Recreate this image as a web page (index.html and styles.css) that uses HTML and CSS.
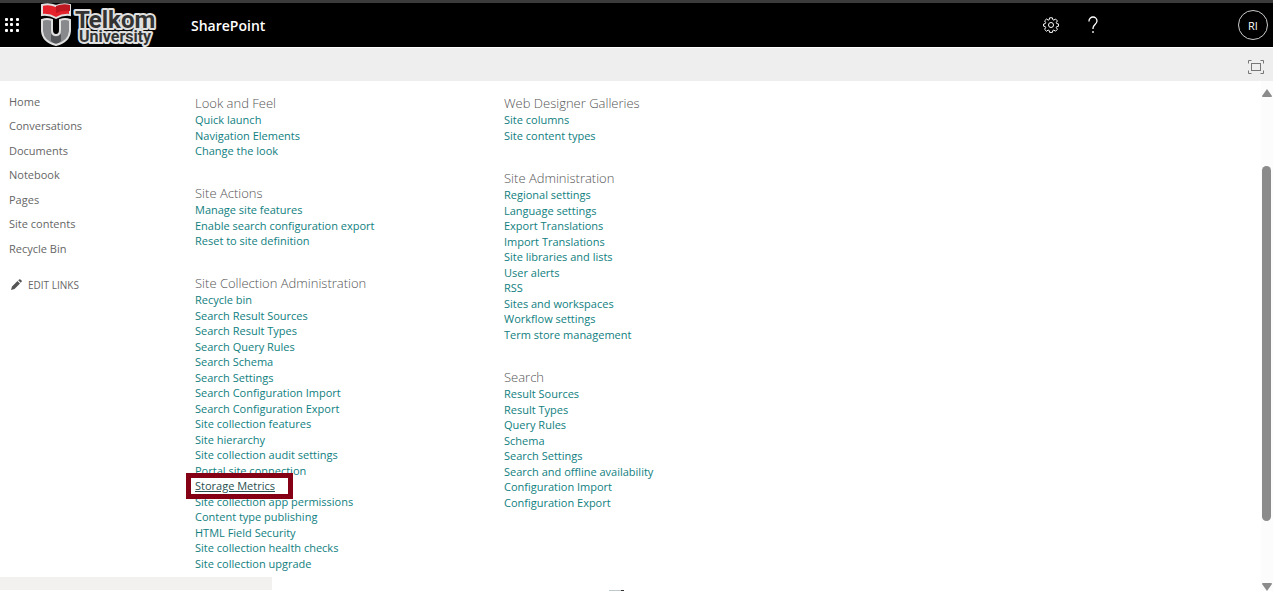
FILE: index.html
```html
<!DOCTYPE html>
<html lang="en">
<head>
    <meta charset="UTF-8">
    <meta name="viewport" content="width=device-width, initial-scale=1.0">
    <title>Site Settings</title>
    <link rel="stylesheet" href="styles.css">
</head>
<body>
    <header class="suite-bar">
        <button class="icon-btn launcher" aria-label="App launcher">
            <svg width="16" height="16" viewBox="0 0 16 16" fill="#fff">
                <rect x="1" y="1" width="3" height="3" rx="1"/><rect x="6" y="1" width="3" height="3" rx="1"/><rect x="12" y="1" width="3" height="3" rx="1"/>
                <rect x="1" y="6" width="3" height="3" rx="1"/><rect x="6" y="6" width="3" height="3" rx="1"/><rect x="12" y="6" width="3" height="3" rx="1"/>
                <rect x="1" y="12" width="3" height="3" rx="1"/><rect x="6" y="12" width="3" height="3" rx="1"/><rect x="12" y="12" width="3" height="3" rx="1"/>
            </svg>
        </button>
        <a class="logo" href="#" aria-label="Telkom University">
            <svg width="120" height="44" viewBox="0 0 120 44">
                <path d="M2 2Q9 0 16 3Q23 0 30 2V12Q23 11 16 15Q9 11 2 12Z" fill="#e4222b" stroke="#e0e0e0" stroke-width="2"/>
                <path d="M16 3Q23 0 30 2V8Q23 7 16 10Z" fill="#bd1722"/>
                <path d="M2 17Q7 15 12 17V27Q12 32 16 32Q20 32 20 27V17Q25 15 30 17V28Q29 39 16 42Q3 39 2 28Z" fill="#88898d" stroke="#e0e0e0" stroke-width="2"/>
                <path d="M11 31Q16 36 21 31V38Q16 43 11 38Z" fill="#55565a"/>
                <text class="logo-name" x="35" y="25">Telkom</text>
                <text class="logo-sub" x="39" y="39">University</text>
            </svg>
        </a>
        <a class="app-name" href="#">SharePoint</a>
        <div class="suite-actions">
            <button class="icon-btn" aria-label="Settings">
                <svg width="16" height="16" viewBox="0 0 16 16" fill="none" stroke="#fff" stroke-linejoin="round">
                    <path d="M6.600.8h2.800l.4 1.900 1 .4 1.700-1.100 1.900 1.900-1.100 1.700.4 1 1.900.4v2.200l-1.900.4-.4 1 1.100 1.700-1.900 1.900-1.700-1.100-1 .4-.4 1.900H6.600l-.4-1.900-1-.4-1.700 1.100-1.900-1.900 1.100-1.700-.4-1-1.700-.4V7l1.700-.4.4-1-1.100-1.700 1.900-1.900 1.700 1.100 1-.4z"/>
                    <circle cx="8" cy="8" r="2.500"/>
                </svg>
            </button>
            <button class="icon-btn" aria-label="Help">
                <svg width="12" height="18" viewBox="0 0 12 18" fill="none" stroke="#fff" stroke-width="1.3">
                    <path d="M2 5.500V5a4 4 0 0 1 8 0c0 3-4 4-4 7v1"/>
                    <path d="M6 15v2"/>
                </svg>
            </button>
            <button class="avatar" aria-label="Account">RI</button>
        </div>
    </header>

    <div class="ribbon">
        <button class="icon-btn" aria-label="Focus on content">
            <svg width="16" height="14" viewBox="0 0 16 14" fill="none" stroke="#777">
                <path d="M.5 3.500v-3h3M12.500.5h3v3M15.500 10.500v3h-3M3.500 13.500h-3v-3"/>
                <rect x="3.500" y="3.500" width="9" height="7"/>
            </svg>
        </button>
    </div>

    <div class="workspace">
        <nav class="side-nav">
            <ul>
                <li><a href="#">Home</a></li>
                <li><a href="#">Conversations</a></li>
                <li><a href="#">Documents</a></li>
                <li><a href="#">Notebook</a></li>
                <li><a href="#">Pages</a></li>
                <li><a href="#">Site contents</a></li>
                <li><a href="#">Recycle Bin</a></li>
            </ul>
            <a class="edit-links" href="#">
                <svg width="12" height="12" viewBox="0 0 12 12" fill="#555">
                    <path d="M1 11l1-3.500 5.500-5.500 2.500 2.500L4.500 10zM8.200 1.300L9.200.4q.6-.5 1.200 0l1.200 1.200q.5.600 0 1.200l-.9.9z"/>
                </svg>
                EDIT LINKS
            </a>
        </nav>

        <main class="settings">
            <div class="column">
                <section>
                    <h2>Look and Feel</h2>
                    <ul>
                        <li><a href="#">Quick launch</a></li>
                        <li><a href="#">Navigation Elements</a></li>
                        <li><a href="#">Change the look</a></li>
                    </ul>
                </section>
                <section>
                    <h2>Site Actions</h2>
                    <ul>
                        <li><a href="#">Manage site features</a></li>
                        <li><a href="#">Enable search configuration export</a></li>
                        <li><a href="#">Reset to site definition</a></li>
                    </ul>
                </section>
                <section>
                    <h2>Site Collection Administration</h2>
                    <ul>
                        <li><a href="#">Recycle bin</a></li>
                        <li><a href="#">Search Result Sources</a></li>
                        <li><a href="#">Search Result Types</a></li>
                        <li><a href="#">Search Query Rules</a></li>
                        <li><a href="#">Search Schema</a></li>
                        <li><a href="#">Search Settings</a></li>
                        <li><a href="#">Search Configuration Import</a></li>
                        <li><a href="#">Search Configuration Export</a></li>
                        <li><a href="#">Site collection features</a></li>
                        <li><a href="#">Site hierarchy</a></li>
                        <li><a href="#">Site collection audit settings</a></li>
                        <li><a href="#">Portal site connection</a></li>
                        <li><a class="highlighted" href="#">Storage Metrics</a></li>
                        <li><a href="#">Site collection app permissions</a></li>
                        <li><a href="#">Content type publishing</a></li>
                        <li><a href="#">HTML Field Security</a></li>
                        <li><a href="#">Site collection health checks</a></li>
                        <li><a href="#">Site collection upgrade</a></li>
                    </ul>
                </section>
            </div>
            <div class="column">
                <section>
                    <h2>Web Designer Galleries</h2>
                    <ul>
                        <li><a href="#">Site columns</a></li>
                        <li><a href="#">Site content types</a></li>
                    </ul>
                </section>
                <section>
                    <h2>Site Administration</h2>
                    <ul>
                        <li><a href="#">Regional settings</a></li>
                        <li><a href="#">Language settings</a></li>
                        <li><a href="#">Export Translations</a></li>
                        <li><a href="#">Import Translations</a></li>
                        <li><a href="#">Site libraries and lists</a></li>
                        <li><a href="#">User alerts</a></li>
                        <li><a href="#">RSS</a></li>
                        <li><a href="#">Sites and workspaces</a></li>
                        <li><a href="#">Workflow settings</a></li>
                        <li><a href="#">Term store management</a></li>
                    </ul>
                </section>
                <section>
                    <h2>Search</h2>
                    <ul>
                        <li><a href="#">Result Sources</a></li>
                        <li><a href="#">Result Types</a></li>
                        <li><a href="#">Query Rules</a></li>
                        <li><a href="#">Schema</a></li>
                        <li><a href="#">Search Settings</a></li>
                        <li><a href="#">Search and offline availability</a></li>
                        <li><a href="#">Configuration Import</a></li>
                        <li><a href="#">Configuration Export</a></li>
                    </ul>
                </section>
            </div>
        </main>

        <div class="scrollbar" aria-hidden="true">
            <svg width="10" height="8" viewBox="0 0 10 8" fill="#8b8b8b"><path d="M5 0L10 7Q10 8 9 8H1Q0 8 0 7Z"/></svg>
            <div class="track"><div class="thumb"></div></div>
            <svg width="10" height="8" viewBox="0 0 10 8" fill="#8b8b8b"><path d="M5 8L10 1Q10 0 9 0H1Q0 0 0 1Z"/></svg>
        </div>
    </div>

    <div class="status-bubble"></div>
    <div class="bottom-edge"></div>
</body>
</html>
```

FILE: styles.css
```css
* {
    box-sizing: border-box;
}
body {
    margin: 0;
    height: 100vh;
    display: flex;
    flex-direction: column;
    overflow: hidden;
    background: #fff;
    color: #666;
    font-family: "Segoe UI", "Open Sans", sans-serif;
    font-size: 11px;
}
a {
    color: inherit;
    text-decoration: none;
}
ul {
    list-style: none;
    margin: 0;
    padding: 0;
}
svg {
    display: block;
}
button {
    font-family: inherit;
    padding: 0;
    border: none;
    background: none;
    cursor: pointer;
}

/* top bar */
.suite-bar {
    flex: none;
    display: flex;
    align-items: center;
    height: 47px;
    padding: 0 5px 0 4px;
    border-top: 3px solid #3b3b3b;
    background: #000;
    color: #fff;
}
.logo {
    margin-left: 20px;
}
.logo-name,
.logo-sub {
    font-family: Roboto, sans-serif;
    font-weight: 700;
    fill: #333;
    stroke: #e0e0e0;
    stroke-width: 4px;
    stroke-linejoin: round;
    paint-order: stroke;
}
.logo-name {
    font-size: 24px;
}
.logo-sub {
    font-size: 16px;
}
.app-name {
    margin-left: 31px;
    font-size: 14px;
    font-weight: 600;
}
.suite-actions {
    display: flex;
    align-items: center;
    margin-left: auto;
}
.suite-actions .icon-btn {
    margin-right: 28px;
}
.avatar {
    width: 30px;
    height: 30px;
    margin-left: 111px;
    border: 1px solid #ccc;
    border-radius: 50%;
    color: #fff;
    font-size: 11px;
}
.ribbon {
    flex: none;
    display: flex;
    align-items: center;
    justify-content: flex-end;
    height: 34px;
    padding: 4px 9px 0 0;
    border-top: 1px solid #fff;
    background: #eee;
}

.workspace {
    flex: 1;
    min-height: 0;
    display: flex;
}

/* left navigation */
.side-nav {
    flex: none;
    width: 195px;
    padding: 9px;
}
.side-nav li {
    line-height: 24px;
}
.side-nav li:nth-child(even) {
    padding-bottom: 1px;
}
.edit-links {
    display: flex;
    align-items: center;
    gap: 6px;
    margin-top: 14px;
    padding-left: 1px;
    font-size: 10px;
    line-height: 20px;
}

/* settings links */
.settings {
    flex: 1;
    display: flex;
    padding-top: 13px;
}
.column {
    width: 309px;
}
.column section {
    margin-bottom: 26px;
}
.column h2 {
    margin: 0;
    color: #555;
    font-size: 13px;
    font-weight: 300;
    line-height: 18px;
}
.column li {
    line-height: 15px;
    color: #0f8080;
}
.column li:nth-child(odd):not(:last-child) {
    padding-bottom: 1px;
}
.column li a:hover {
    text-decoration: underline;
}
.column .highlighted {
    position: relative;
    color: #2a4f4f;
    text-decoration: underline;
}
.highlighted::after {
    content: "";
    position: absolute;
    inset: -5px -18px -6px -9px;
    border: 5px solid #850014;
}

/* scrollbar */
.scrollbar {
    flex: none;
    display: flex;
    flex-direction: column;
    align-items: center;
    width: 12px;
    padding: 8px 1px 0 0;
    background: #fcfcfc;
}
.track {
    flex: 1;
    width: 9px;
}
.thumb {
    height: 73%;
    margin-top: 69px;
    border-radius: 5px;
    background: #8b8b8b;
}

.status-bubble {
    position: fixed;
    left: 0;
    bottom: 1px;
    width: 272px;
    height: 13px;
    background: #f2f1f0;
}
.bottom-edge {
    position: fixed;
    left: 609px;
    bottom: 0;
    width: 15px;
    height: 1px;
    border-right: 3px solid #333;
    background: #bcc8cc;
}
```
